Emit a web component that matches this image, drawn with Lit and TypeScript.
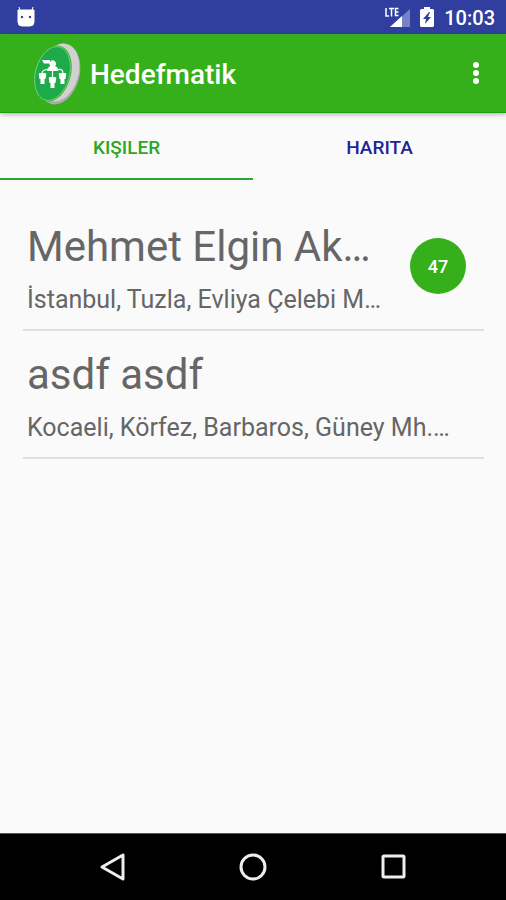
import { LitElement, html, css, svg, nothing } from "lit";
import { customElement, state } from "lit/decorators.js";
import { classMap } from "lit/directives/class-map.js";

interface Person {
  name: string;
  address: string;
  score?: number;
}

const people: Person[] = [
  { name: "Mehmet Elgin Ak…", address: "İstanbul, Tuzla, Evliya Çelebi M…", score: 47 },
  { name: "asdf asdf", address: "Kocaeli, Körfez, Barbaros, Güney Mh.…" },
];

const tabs = ["KIŞILER", "HARITA"];

const figure = (x: number, y: number) => svg`
  <path d="M${x - 3} ${y}h6l.8 1-.8 5h-1v5h-4v-5h-1l-.8-5z" fill="#fff" />
`;

@customElement("app-root")
export class AppRoot extends LitElement {
  @state() private active = 0;

  static styles = css`
    :host {
      display: flex;
      flex-direction: column;
      min-height: 100vh;
      background: #fafafa;
      font-family: Roboto, "Noto Sans", sans-serif;
      color: #666;
    }
    * {
      box-sizing: border-box;
    }
    svg {
      display: block;
      flex: none;
    }
    button {
      border: 0;
      padding: 0;
      background: none;
      font: inherit;
      color: inherit;
      cursor: pointer;
    }
    .status {
      display: flex;
      align-items: center;
      height: 34px;
      padding: 0 11px 0 16px;
      background: #303f9f;
      color: #fff;
    }
    .status-right {
      display: flex;
      align-items: center;
      gap: 10px;
      margin-left: auto;
    }
    .clock {
      font-size: 20px;
      line-height: 24px;
      font-weight: 500;
      padding-top: 2px;
    }
    .bar {
      display: flex;
      align-items: center;
      height: 79px;
      padding: 0 12px 0 32px;
      background: #35b01a;
      border-bottom: 1px solid #1f9a12;
      box-shadow: 0 2px 4px rgba(0, 0, 0, 0.25);
      color: #fff;
      z-index: 1;
    }
    .title {
      margin: 0 auto 0 8px;
      padding-top: 4px;
      font-size: 28px;
      line-height: 32px;
      font-weight: 500;
    }
    .more {
      padding: 8px;
    }
    .tabs {
      display: flex;
      height: 67px;
    }
    .tab {
      flex: 1;
      padding-top: 4px;
      border-bottom: 2px solid transparent;
      font-size: 19px;
      line-height: 24px;
      font-weight: 500;
      color: #1f2596;
    }
    .tab.active {
      color: #2ba81e;
      border-color: #2ba834;
    }
    .list {
      flex: 1;
      list-style: none;
      margin: 0;
      padding: 23px 22px 0 23px;
    }
    .person {
      display: flex;
      align-items: center;
      height: 128px;
      padding: 0 18px 0 4px;
      border-bottom: 2px solid #e0e0e0;
    }
    .info {
      flex: 1;
      min-width: 0;
      white-space: nowrap;
    }
    .name {
      margin: 0;
      font-size: 42px;
      line-height: 50px;
      font-weight: 400;
      padding-top: 5px;
    }
    .address {
      margin: 12px 0 0;
      font-size: 25px;
      line-height: 32px;
    }
    .score {
      display: grid;
      place-items: center;
      width: 56px;
      height: 56px;
      border-radius: 50%;
      background: #35b01a;
      color: #fff;
      font-size: 18px;
      font-weight: 500;
    }
    .nav {
      display: flex;
      justify-content: center;
      gap: 112px;
      height: 67px;
      border-top: 1px solid #555;
      background: #000;
    }
  `;

  render() {
    return html`
      <header class="status">
        <svg width="20" height="22" viewBox="0 0 20 22" aria-hidden="true">
          <path d="M2 4h16v12q0 4-4 4H6q-4 0-4-4zM4 4l-1-3M16 4l1-3" fill="#fff" stroke="#fff" stroke-width="1" />
          <circle cx="6" cy="11" r="1.2" fill="#303f9f" />
          <circle cx="14" cy="11" r="1.2" fill="#303f9f" />
        </svg>
        <div class="status-right">
          <svg width="26" height="22" viewBox="0 0 26 22" role="img" aria-label="LTE">
            <path d="M26 3v18H6z" fill="#7682c3" />
            <path d="M18 10v11H6z" fill="#fff" />
            <path d="M2 2v8h3M5 2.500h5M7.500 2.500v8M14.500 2.500h-3v7h3M11.500 6h3" fill="none" stroke="#fff" stroke-width="1.500" />
          </svg>
          <svg width="14" height="22" viewBox="0 0 14 22" aria-hidden="true">
            <path d="M4 1h6v2h3l1 1v16l-1 1H1l-1-1V4l1-1h3z" fill="#fff" />
            <path d="M9 6 3 13h3l-1 5 6-7H8l2-5z" fill="#303f9f" />
          </svg>
          <span class="clock">10:03</span>
        </div>
      </header>
      <div class="bar">
        <svg width="50" height="66" viewBox="0 0 50 66" aria-hidden="true">
          <ellipse cx="27" cy="34" rx="20.500" ry="31" transform="rotate(15 27 34)" fill="#a9aca9" />
          <ellipse cx="27" cy="32.500" rx="19.500" ry="29.500" transform="rotate(15 27 32.500)" fill="#d0d1d0" />
          <ellipse cx="21" cy="33.500" rx="17.800" ry="28.500" transform="rotate(15 21 33.500)" fill="#35b01a" />
          <ellipse cx="20.500" cy="33.500" rx="17" ry="27.500" transform="rotate(15 20.500 33.500)" fill="#1eaa4b" stroke="#7fd08f" stroke-width="0.800" />
          <path d="M10 20h8v3.500h-6zM15 31c0-3 2-4 3.500-5a3.200 3.200 0 1 1 4.500 0c2 1 3.500 2 3.500 5z" fill="#fff" />
          <path d="M16 29.500q-6 0-6 4M26 29.500q5-1 5 4M20.500 30v7" fill="none" stroke="#fff" stroke-width="1.200" />
          ${figure(10.5, 33)}${figure(20.5, 37)}${figure(30.5, 33)}
        </svg>
        <h1 class="title">Hedefmatik</h1>
        <button class="more" aria-label="Menu">
          <svg width="20" height="24" viewBox="0 0 20 24" fill="#fff">
            <circle cx="10" cy="4" r="3" />
            <circle cx="10" cy="12" r="3" />
            <circle cx="10" cy="20" r="3" />
          </svg>
        </button>
      </div>
      <nav class="tabs" role="tablist">
        ${tabs.map(
          (label, i) => html`<button
            class=${classMap({ tab: true, active: i === this.active })}
            role="tab"
            aria-selected=${i === this.active ? "true" : "false"}
            @click=${() => (this.active = i)}
          >${label}</button>`
        )}
      </nav>
      <ul class="list">
        ${people.map(
          (p) => html`<li class="person">
            <div class="info">
              <h2 class="name">${p.name}</h2>
              <p class="address">${p.address}</p>
            </div>
            ${p.score === undefined ? nothing : html`<span class="score">${p.score}</span>`}
          </li>`
        )}
      </ul>
      <footer class="nav">
        <button aria-label="Back">
          <svg width="28" height="30" viewBox="0 0 28 30">
            <path d="M24 3v24L3 15z" fill="none" stroke="#eee" stroke-width="3" stroke-linejoin="round" />
          </svg>
        </button>
        <button aria-label="Home">
          <svg width="28" height="30" viewBox="0 0 28 30">
            <circle cx="14" cy="15" r="12" fill="none" stroke="#eee" stroke-width="3" />
          </svg>
        </button>
        <button aria-label="Recent apps">
          <svg width="28" height="30" viewBox="0 0 28 30">
            <rect x="4" y="4" width="21" height="21" rx="1" fill="none" stroke="#eee" stroke-width="3" />
          </svg>
        </button>
      </footer>
    `;
  }
}
